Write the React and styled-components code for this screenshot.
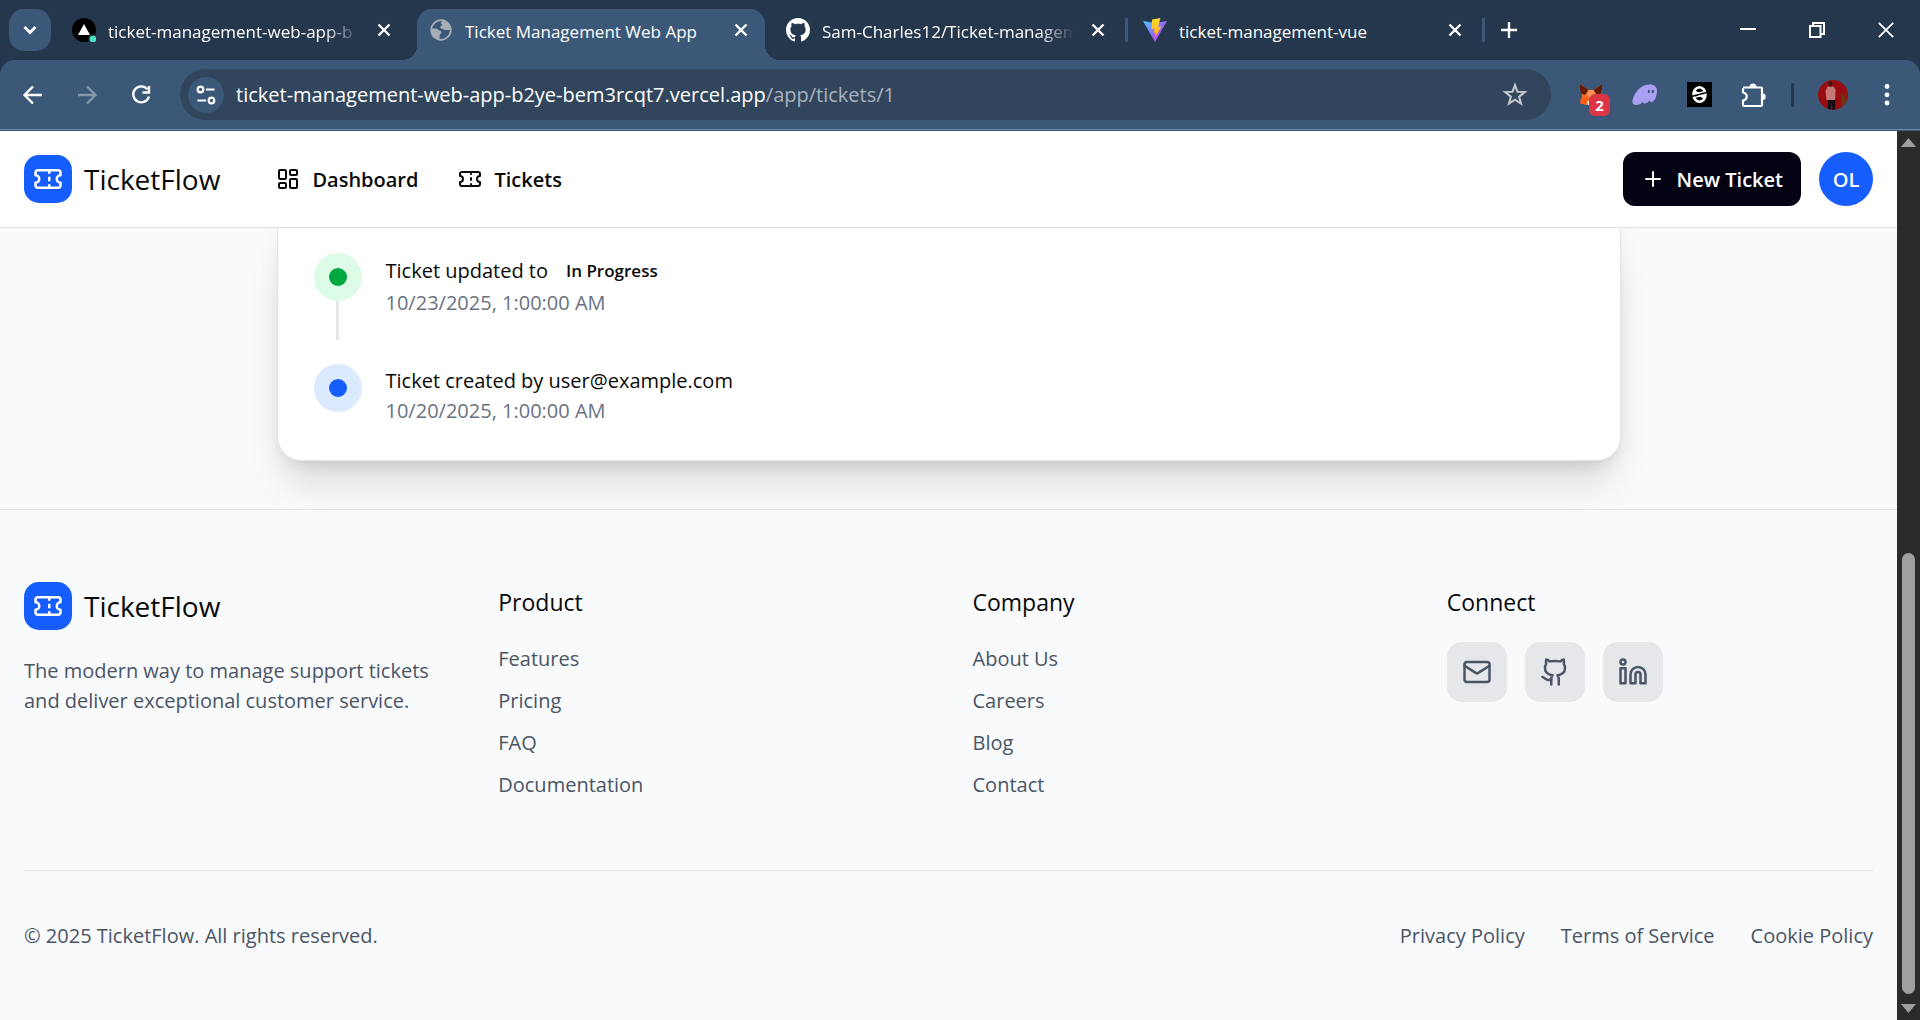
import React from 'react';
import styled, { createGlobalStyle, css } from 'styled-components';
import { LayoutDashboard, Ticket, Plus, Mail, Github, Linkedin } from 'lucide-react';

const color = {
  strip: '#25374d',
  bar: '#3b5879',
  field: '#31455c',
  divider: '#6d8aa6',
  ink: '#0a0a0a',
  body: '#4a5565',
  muted: '#6a7282',
  line: '#e2e3e6',
  page: '#f9fafc',
  brand: '#155dfc',
  night: '#030213',
};

const GlobalStyle = createGlobalStyle`
  *, *::before, *::after { box-sizing: border-box; }
  html, body, #root { height: 100%; }
  body {
    margin: 0;
    overflow: hidden;
    font-family: "Open Sans", "Noto Sans", sans-serif;
    font-size: 20px;
    line-height: 30px;
    color: ${color.ink};
    background: ${color.page};
  }
  button, input { font: inherit; color: inherit; }
  button { padding: 0; border: 0; background: none; cursor: pointer; }
  a { color: inherit; text-decoration: none; }
  h2, p, ul, ol { margin: 0; padding: 0; font-weight: 400; list-style: none; }
  svg { display: block; flex: none; }
`;

/* ---------- browser frame ---------- */

const Window = styled.div`
  display: flex;
  flex-direction: column;
  height: 100%;
`;

const TabStrip = styled.div`
  display: flex;
  align-items: center;
  height: 60px;
  flex: none;
  background: ${color.strip};
  color: #fff;
`;

const TabSearch = styled.button`
  display: grid;
  place-items: center;
  width: 42px;
  height: 42px;
  margin: 0 9px;
  border-radius: 15px;
  background: ${color.bar};
`;

const Tabs = styled.div`
  display: flex;
  align-self: stretch;
  align-items: flex-end;
`;

const TabGap = styled.span`
  width: 9px;
  height: 51px;
  display: grid;
  justify-items: center;
  padding-top: 9px;
  &::before {
    content: '';
    width: 3px;
    height: 24px;
    border-radius: 1px;
    background: ${(p) => (p.$line ? color.bar : 'transparent')};
  }
`;

const Tab = styled.div`
  position: relative;
  display: flex;
  align-items: center;
  gap: 12px;
  width: 348px;
  height: 51px;
  padding: 0 12px 9px;
  border-radius: 15px 15px 0 0;
  ${(p) =>
    p.$active &&
    css`
      background: ${color.bar};
      &::before,
      &::after {
        content: '';
        position: absolute;
        bottom: 0;
        width: 15px;
        height: 15px;
      }
      &::before {
        right: 100%;
        background: radial-gradient(circle at 0 0, transparent 15px, ${color.bar} 15px);
      }
      &::after {
        left: 100%;
        background: radial-gradient(circle at 100% 0, transparent 15px, ${color.bar} 15px);
      }
    `}
`;

const TabTitle = styled.span`
  flex: 1;
  min-width: 0;
  padding-top: 3px;
  overflow: hidden;
  white-space: nowrap;
  font-size: 17px;
  line-height: 24px;
  ${(p) => p.$fade && css`
    mask-image: linear-gradient(to right, #000 calc(100% - 36px), transparent);
  `}
`;

const IconButton = styled.button`
  display: grid;
  place-items: center;
  width: ${(p) => p.$w || 24}px;
  height: ${(p) => p.$h || 24}px;
  color: ${(p) => p.$tone || '#fff'};
`;

const NewTab = styled(IconButton)`
  margin: 0 0 0 9px;
`;

const WindowControls = styled.div`
  display: flex;
  margin-left: auto;
`;

const ToolbarBack = styled.div`
  flex: none;
  background: ${color.strip};
`;

const Toolbar = styled.div`
  display: flex;
  align-items: center;
  height: 69px;
  padding: 0 6px;
  border-radius: 15px 15px 0 0;
  background: ${color.bar};
  color: #fff;
`;

const ToolbarEdge = styled.div`
  height: 2px;
  background: ${color.bar};
  border-top: 1px solid ${color.divider};
`;

const Omnibox = styled.form`
  display: flex;
  align-items: center;
  flex: 1;
  height: 51px;
  margin: 0 13px 0 12px;
  padding: 0 18px 0 8px;
  border-radius: 26px;
  background: ${color.field};
`;

const SiteInfo = styled.button`
  display: grid;
  place-items: center;
  width: 36px;
  height: 36px;
  border-radius: 50%;
  background: ${color.bar};
  color: #fff;
`;

const Address = styled.div`
  flex: 1;
  margin-left: 12px;
  white-space: nowrap;
  color: #a7b2bf;
  outline: none;
  b { font-weight: 400; color: #fff; }
`;

const Extension = styled(IconButton)`
  position: relative;
  width: 54px;
  height: 36px;
`;

const Badge = styled.span`
  position: absolute;
  top: 17px;
  left: 25px;
  width: 21px;
  height: 22px;
  border-radius: 6px;
  background: #dc3545;
  color: #fff;
  font-size: 15px;
  font-weight: 700;
  line-height: 22px;
  text-align: center;
`;

const BarDivider = styled.span`
  width: 3px;
  height: 24px;
  margin: 0 12px 0 11px;
  border-radius: 1px;
  background: ${color.strip};
`;

/* ---------- page ---------- */

const Viewport = styled.div`
  display: flex;
  flex: 1;
  min-height: 0;
`;

const Page = styled.div`
  display: flex;
  flex-direction: column;
  flex: 1;
  min-width: 0;
  overflow: hidden;
`;

const SiteHeader = styled.header`
  position: relative;
  z-index: 1;
  display: flex;
  align-items: center;
  flex: none;
  padding: 21px 24px;
  background: #fff;
  border-bottom: 1px solid ${color.line};
`;

const Brand = styled.a`
  display: flex;
  align-items: center;
  gap: 12px;
  font-size: 28px;
  line-height: 42px;
`;

const BrandMark = styled.span`
  display: grid;
  place-items: center;
  width: 48px;
  height: 48px;
  border-radius: 15px;
  background: ${color.brand};
  color: #fff;
`;

const Nav = styled.nav`
  display: flex;
  gap: 40px;
  margin-left: 56px;
`;

const NavLink = styled.a`
  display: flex;
  align-items: center;
  gap: 12px;
  font-weight: 600;
`;

const Label = styled.span`
  padding-top: 2px;
`;

const Actions = styled.div`
  display: flex;
  gap: 18px;
  margin-left: auto;
`;

const NewTicket = styled.button`
  display: flex;
  align-items: center;
  gap: 12px;
  height: 54px;
  padding: 0 18px;
  border-radius: 12px;
  background: ${color.night};
  color: #fff;
  font-weight: 600;
`;

const Avatar = styled.button`
  width: 54px;
  height: 54px;
  padding-top: 2px;
  border-radius: 50%;
  background: ${color.brand};
  color: #fff;
  font-weight: 600;
`;

const Main = styled.main`
  flex: none;
  width: 100%;
  max-width: 1344px;
  margin: 0 auto;
  padding-bottom: 48px;
`;

const Card = styled.section`
  padding: 25px 36px 34px;
  background: #fff;
  border: 1px solid ${color.line};
  border-top: 0;
  border-radius: 0 0 24px 24px;
  box-shadow: 0 30px 38px -8px rgba(0, 0, 0, 0.12), 0 10px 16px -8px rgba(0, 0, 0, 0.1), 0 0 24px rgba(0, 0, 0, 0.04);
`;

const Event = styled.li`
  display: flex;
  gap: 24px;
  & + & { margin-top: 24px; }
`;

const Rail = styled.div`
  display: flex;
  flex-direction: column;
  align-items: center;
`;

const tones = {
  green: ['#dcfce7', '#00a63e'],
  blue: ['#dbeafe', '#155dfc'],
};

const Marker = styled.span`
  display: grid;
  place-items: center;
  width: 48px;
  height: 48px;
  border-radius: 50%;
  background: ${(p) => tones[p.$tone][0]};
  &::before {
    content: '';
    width: 18px;
    height: 18px;
    border-radius: 50%;
    background: ${(p) => tones[p.$tone][1]};
  }
`;

const Stem = styled.span`
  flex: 1;
  width: 3px;
  background: #e5e7eb;
`;

const EventText = styled.div`
  padding: ${(p) => (p.$last ? '2px 0 0' : '0 0 22px')};
`;

const EventTitle = styled.p`
  display: flex;
  align-items: center;
  gap: 18px;
  min-height: ${(p) => (p.$tall ? 35 : 30)}px;
`;

const Status = styled.span`
  font-size: 17px;
  font-weight: 600;
`;

const Stamp = styled.time`
  display: block;
  color: ${color.muted};
`;

const Footer = styled.footer`
  flex: 1 0 auto;
  padding: 72px 24px;
  border-top: 1px solid ${color.line};
  background: ${color.page};
  color: ${color.body};
`;

const Columns = styled.div`
  display: grid;
  grid-template-columns: repeat(4, 1fr);
  gap: 48px;
  padding-bottom: 70px;
`;

const FooterBrand = styled.div`
  ${Brand} { color: ${color.ink}; }
  p { margin-top: 26px; }
`;

const ColumnTitle = styled.h2`
  padding-top: 2px;
  margin-bottom: 22px;
  font-size: 23px;
  line-height: 36px;
  color: ${color.ink};
`;

const LinkList = styled.ul`
  display: grid;
  gap: 12px;
  padding-top: 2px;
`;

const Socials = styled.div`
  display: flex;
  gap: 18px;
`;

const Social = styled.a`
  display: grid;
  place-items: center;
  width: 60px;
  height: 60px;
  border-radius: 15px;
  background: #e5e7eb;
`;

const Legal = styled.div`
  display: flex;
  justify-content: space-between;
  padding-top: 50px;
  border-top: 1px solid ${color.line};
`;

const LegalLinks = styled.nav`
  display: flex;
  gap: 36px;
`;

/* ---------- scroll bar ---------- */

const ScrollTrack = styled.div`
  display: flex;
  flex-direction: column;
  align-items: center;
  flex: none;
  width: 23px;
  padding: 7px 0;
  background: #2b2b2b;
`;

const ScrollRun = styled.div`
  display: flex;
  flex-direction: column;
  justify-content: flex-end;
  flex: 1;
  width: 13px;
  padding: 10px 0;
`;

const ScrollThumb = styled.div`
  height: calc(53% - 3px);
  border-radius: 7px;
  background: #9f9f9f;
`;

/* ---------- drawings ---------- */

const Stroke = ({ size, box = 24, w = 2, cap = 'butt', children }) => (
  <svg width={size} height={size} viewBox={`0 0 ${box} ${box}`} fill="none" stroke="currentColor" strokeWidth={w} strokeLinecap={cap} aria-hidden="true">
    {children}
  </svg>
);

const CloseX = () => <Stroke size={16} box={16} w={2.4}><path d="M2.5 2.5l11 11M13.5 2.5l-11 11" /></Stroke>;
const Chevron = () => <Stroke size={18} box={18} w={2.8}><path d="M3.5 6l5.5 5.5L14.5 6" /></Stroke>;
const PlusGlyph = () => <Stroke size={18} box={18} w={2.4}><path d="M9 1v16M1 9h16" /></Stroke>;
const BackArrow = () => <Stroke size={24} w={2.4}><path d="M21 12H5M12 3.5L3.500 12l8.500 8.500" /></Stroke>;
const ForwardArrow = () => <Stroke size={24} w={2.4}><path d="M3 12h16M12 3.500l8.500 8.500-8.500 8.500" /></Stroke>;
const Reload = () => (
  <Stroke size={24} w={2.4}>
    <path d="M18.500 6.300A8 8 0 1 0 20 13.500" />
    <path d="M20 3v6.500h-6.500" />
  </Stroke>
);
const Tune = () => (
  <Stroke size={24} w={2.2}>
    <circle cx="6.5" cy="6.5" r="2.8" />
    <path d="M12 6.5h8.5M3.5 17.5H12" />
    <circle cx="17.5" cy="17.5" r="2.8" />
  </Stroke>
);
const Star = () => (
  <Stroke size={26} w={1.9}>
    <path d="M12 2.800l2.300 6.200 6.700.3-5.200 4.200 1.800 6.500L12 16.300 6.400 20l1.800-6.500L3 9.300l6.700-.3z" />
  </Stroke>
);
const Minimize = () => <Stroke size={16} box={16} w={2}><path d="M0 7h16" /></Stroke>;
const Restore = () => <Stroke size={16} box={16} w={2}><path d="M1 4h10.500v11H1zM4 4V1h11v11h-3.500" /></Stroke>;
const CloseWindow = () => <Stroke size={16} box={16} w={1.8}><path d="M.8.8l14.400 14.400M15.200.8L.8 15.200" /></Stroke>;

const VercelIcon = () => (
  <svg width="24" height="24" viewBox="0 0 24 24" aria-hidden="true">
    <circle cx="12" cy="12" r="12" fill="#000" />
    <path d="M12 6l6 11H6z" fill="#fff" />
    <circle cx="21" cy="21" r="4.600" fill="#25374d" />
    <circle cx="21" cy="21" r="3.300" fill="#4be3c2" />
  </svg>
);
const GlobeIcon = () => (
  <svg width="24" height="24" viewBox="0 0 24 24" aria-hidden="true">
    <circle cx="12" cy="12" r="9.800" fill="none" stroke="#a7adb4" strokeWidth="1.800" />
    <path fill="#a7adb4" d="M14.500 2.500c-1 .6-2.600 1.300-2.600 2.500 0 1 1.200.9 1.200 1.900s-1.900 1.100-1.900 2.300c0 1 .7 1.200 1.600 1.200 1.300 0 1.500 1.500 2.900 1.500h5.800C22 7.500 19 3.500 14.500 2.500zM2.300 10.500h4.400c2 0 2.200 1.700 3.600 1.900 1.500.2 2.200.8 2.200 2 0 1.600-1.900 1.400-1.900 3v4C5.500 21.600 1.700 17 2.300 10.500z" />
  </svg>
);
const OctocatIcon = () => (
  <svg width="24" height="24" viewBox="0 0 16 16" aria-hidden="true">
    <path fill="#fff" d="M8 0C3.580 0 0 3.580 0 8c0 3.540 2.290 6.530 5.470 7.590.4.070.55-.17.55-.38 0-.19-.01-.82-.01-1.490-2.010.37-2.530-.49-2.690-.94-.09-.23-.48-.94-.82-1.130-.28-.15-.68-.52-.01-.53.63-.01 1.080.58 1.230.82.72 1.210 1.870.87 2.330.66.07-.52.28-.87.51-1.070-1.780-.2-3.640-.89-3.640-3.950 0-.87.31-1.590.82-2.150-.08-.2-.36-1.020.08-2.120 0 0 .67-.21 2.200.82.64-.18 1.320-.27 2-.27s1.360.09 2 .27c1.530-1.040 2.200-.82 2.200-.82.44 1.100.16 1.920.08 2.120.51.56.82 1.270.82 2.150 0 3.070-1.870 3.750-3.650 3.950.29.25.54.73.54 1.480 0 1.070-.01 1.930-.01 2.200 0 .21.15.46.55.38A8.010 8.010 0 0 0 16 8c0-4.420-3.580-8-8-8z" />
  </svg>
);
const ViteIcon = () => (
  <svg width="24" height="24" viewBox="0 0 24 24" aria-hidden="true">
    <defs>
      <linearGradient id="viteBody" x1="0" y1="0" x2="1" y2="1">
        <stop offset="0" stopColor="#41d1ff" />
        <stop offset="0.600" stopColor="#a259ff" />
        <stop offset="1" stopColor="#bd34fe" />
      </linearGradient>
      <linearGradient id="viteBolt" x1="0" y1="0" x2="0" y2="1">
        <stop offset="0" stopColor="#ffdd35" />
        <stop offset="1" stopColor="#ffa800" />
      </linearGradient>
    </defs>
    <path d="M0 3l12 2 12-2-12 21z" fill="url(#viteBody)" />
    <path d="M17.500 0L9 1.600l-.6 9.600 3.200-.7-1 4.500 2.300-.7-1.500 6.700L18.500 8.300l-3.500.7z" fill="url(#viteBolt)" />
  </svg>
);
const FoxIcon = () => (
  <svg width="24" height="24" viewBox="0 0 24 24" aria-hidden="true">
    <path d="M1 1l8.500 6h5L23 1l-1 12 1 6-6 3H7l-5.500-2L3 13z" fill="#f4702b" />
    <path d="M1 1l8.500 6L6 12 2 10.500 1 6zM23 1l-8.500 6L18 12l4-1.500L23 6z" fill="#661b06" />
    <path d="M9.500 7h5l1.500 7h-8z" fill="#ff9456" />
    <path d="M1.500 16l7-3 1 7-8 1z" fill="#ff5c16" />
    <path d="M8 18h8l-1 4H9z" fill="#e7e3e0" />
  </svg>
);
const GhostIcon = () => (
  <svg width="26" height="22" viewBox="0 0 26 22" aria-hidden="true">
    <path d="M.5 18C.5 12 7 .5 17.500.5 22.500.5 25 3 25 7c0 5-2.500 11-5.500 11-1.500 0-1.700-1-2-2-1 2-3 3.500-5 3.500-1.300 0-1.800-.8-1.500-2-1.500 2-4 3.500-6.500 3.500C1.500 21 .5 20 .5 18z" fill="#ab9ff2" />
    <ellipse cx="16.800" cy="7.500" rx="1.100" ry="1.800" fill="#3b5879" />
    <ellipse cx="20.900" cy="7.500" rx="1.100" ry="1.800" fill="#3b5879" />
  </svg>
);
const SlashIcon = () => (
  <svg width="25" height="25" viewBox="0 0 25 25" aria-hidden="true">
    <rect width="25" height="25" fill="#000" />
    <ellipse cx="12.500" cy="12.500" rx="6" ry="7.300" fill="none" stroke="#fff" strokeWidth="2.600" />
    <path d="M6 9.500L18.500 15.500" stroke="#fff" strokeWidth="3.600" />
    <path d="M4.500 14.500L20.500 10.300" stroke="#000" strokeWidth="1.700" />
    <path d="M7 12.200L18 9.300M7 15.600L18 12.700" stroke="#fff" strokeWidth="1.300" />
  </svg>
);
const PuzzleIcon = () => (
  <svg width="27" height="27" viewBox="0 0 27 27" aria-hidden="true">
    <path d="M3 6.500h18a1 1 0 0 1 1 1V24a1 1 0 0 1-1 1H4a1 1 0 0 1-1-1v-4.500c5-1 5-7 0-8V7.500" fill="none" stroke="#fff" strokeWidth="2.200" strokeLinejoin="round" />
    <path d="M9.500 6a3.500 3.500 0 0 1 7 0zM22.500 12.500a3.200 3.200 0 0 1 0 6.400z" fill="#fff" />
  </svg>
);
const ProfileIcon = () => (
  <svg width="30" height="30" viewBox="0 0 30 30" aria-hidden="true">
    <defs>
      <clipPath id="profileClip"><circle cx="15" cy="15" r="15" /></clipPath>
    </defs>
    <g clipPath="url(#profileClip)">
      <rect width="30" height="30" fill="#990d12" />
      <path d="M24 30c-1-7-1-12 0-19l2 6 3-5-2 8 3-2v12z" fill="#6d3515" />
      <path d="M10 19h7.500l-.6 11h-2.500l-.6-8-.8 8H9.500z" fill="#15100f" />
      <path d="M9.500 6.500h6l2 3-.3 10.500H8.500L7.500 11z" fill="#c77879" />
      <ellipse cx="12.500" cy="4" rx="2" ry="2.800" fill="#3b1a14" />
    </g>
  </svg>
);
const DotsIcon = () => (
  <svg width="6" height="24" viewBox="0 0 6 24" fill="#fff" aria-hidden="true">
    <circle cx="3" cy="3.5" r="2.4" />
    <circle cx="3" cy="11.8" r="2.4" />
    <circle cx="3" cy="20" r="2.4" />
  </svg>
);
const ScrollArrow = ({ up }) => (
  <svg width="15" height="9" viewBox="0 0 15 9" aria-hidden="true">
    <path d={up ? 'M7.5 0L15 9H0z' : 'M7.5 9L0 0h15z'} fill="#9f9f9f" />
  </svg>
);

/* ---------- content ---------- */

const browserTabs = [
  { title: 'ticket-management-web-app-b', Icon: VercelIcon, fade: true },
  { title: 'Ticket Management Web App', Icon: GlobeIcon, active: true },
  { title: 'Sam-Charles12/Ticket-managem', Icon: OctocatIcon, fade: true, line: true },
  { title: 'ticket-management-vue', Icon: ViteIcon, line: true },
];

const footerColumns = [
  { title: 'Product', links: ['Features', 'Pricing', 'FAQ', 'Documentation'] },
  { title: 'Company', links: ['About Us', 'Careers', 'Blog', 'Contact'] },
];

const socials = [
  { name: 'Email', Icon: Mail },
  { name: 'GitHub', Icon: Github },
  { name: 'LinkedIn', Icon: Linkedin },
];

const Logo = () => (
  <Brand href="#">
    <BrandMark><Ticket size={30} /></BrandMark>
    TicketFlow
  </Brand>
);

function BrowserFrame() {
  return (
    <>
      <TabStrip>
        <TabSearch aria-label="Search tabs"><Chevron /></TabSearch>
        <Tabs>
          {browserTabs.map(({ title, Icon, active, fade, line }) => (
            <React.Fragment key={title}>
              <Tab $active={active}>
                <Icon />
                <TabTitle $fade={fade}>{title}</TabTitle>
                <IconButton aria-label="Close tab"><CloseX /></IconButton>
              </Tab>
              <TabGap $line={line} />
            </React.Fragment>
          ))}
        </Tabs>
        <NewTab aria-label="New tab"><PlusGlyph /></NewTab>
        <WindowControls>
          <IconButton $w={69} $h={60} aria-label="Minimize"><Minimize /></IconButton>
          <IconButton $w={69} $h={60} aria-label="Restore"><Restore /></IconButton>
          <IconButton $w={69} $h={60} aria-label="Close"><CloseWindow /></IconButton>
        </WindowControls>
      </TabStrip>
      <ToolbarBack>
        <Toolbar>
          <IconButton $w={54} $h={48} aria-label="Back"><BackArrow /></IconButton>
          <IconButton $w={54} $h={48} $tone="#8497ab" aria-label="Forward"><ForwardArrow /></IconButton>
          <IconButton $w={54} $h={48} aria-label="Reload"><Reload /></IconButton>
          <Omnibox onSubmit={(e) => e.preventDefault()}>
            <SiteInfo type="button" aria-label="Site information"><Tune /></SiteInfo>
            <Address role="textbox" aria-label="Address" contentEditable suppressContentEditableWarning spellCheck={false}>
              <b>ticket-management-web-app-b2ye-bem3rcqt7.vercel.app</b>/app/tickets/1
            </Address>
            <IconButton type="button" $w={36} $h={36} $tone="#c3c6ca" aria-label="Bookmark"><Star /></IconButton>
          </Omnibox>
          <Extension aria-label="Wallet"><FoxIcon /><Badge>2</Badge></Extension>
          <Extension aria-label="Ghost wallet"><GhostIcon /></Extension>
          <Extension aria-label="Shortcuts"><SlashIcon /></Extension>
          <Extension aria-label="Extensions"><PuzzleIcon /></Extension>
          <BarDivider />
          <Extension aria-label="Profile"><ProfileIcon /></Extension>
          <Extension aria-label="Menu"><DotsIcon /></Extension>
        </Toolbar>
        <ToolbarEdge />
      </ToolbarBack>
    </>
  );
}

export default function App() {
  return (
    <Window>
      <GlobalStyle />
      <BrowserFrame />
      <Viewport>
        <Page>
          <SiteHeader>
            <Logo />
            <Nav>
              <NavLink href="#"><LayoutDashboard size={24} /><Label>Dashboard</Label></NavLink>
              <NavLink href="#"><Ticket size={24} /><Label>Tickets</Label></NavLink>
            </Nav>
            <Actions>
              <NewTicket><Plus size={24} /><Label>New Ticket</Label></NewTicket>
              <Avatar>OL</Avatar>
            </Actions>
          </SiteHeader>
          <Main>
            <Card>
              <ol>
                <Event>
                  <Rail><Marker $tone="green" /><Stem /></Rail>
                  <EventText>
                    <EventTitle $tall>Ticket updated to <Status>In Progress</Status></EventTitle>
                    <Stamp>10/23/2025, 1:00:00 AM</Stamp>
                  </EventText>
                </Event>
                <Event>
                  <Rail><Marker $tone="blue" /></Rail>
                  <EventText $last>
                    <EventTitle>Ticket created by user@example.com</EventTitle>
                    <Stamp>10/20/2025, 1:00:00 AM</Stamp>
                  </EventText>
                </Event>
              </ol>
            </Card>
          </Main>
          <Footer>
            <Columns>
              <FooterBrand>
                <Logo />
                <p>The modern way to manage support tickets and deliver exceptional customer service.</p>
              </FooterBrand>
              {footerColumns.map(({ title, links }) => (
                <div key={title}>
                  <ColumnTitle>{title}</ColumnTitle>
                  <LinkList>
                    {links.map((label) => <li key={label}><a href="#">{label}</a></li>)}
                  </LinkList>
                </div>
              ))}
              <div>
                <ColumnTitle>Connect</ColumnTitle>
                <Socials>
                  {socials.map(({ name, Icon }) => (
                    <Social key={name} href="#" aria-label={name}><Icon size={30} /></Social>
                  ))}
                </Socials>
              </div>
            </Columns>
            <Legal>
              <p>© 2025 TicketFlow. All rights reserved.</p>
              <LegalLinks>
                <a href="#">Privacy Policy</a>
                <a href="#">Terms of Service</a>
                <a href="#">Cookie Policy</a>
              </LegalLinks>
            </Legal>
          </Footer>
        </Page>
        <ScrollTrack>
          <ScrollArrow up />
          <ScrollRun><ScrollThumb /></ScrollRun>
          <ScrollArrow />
        </ScrollTrack>
      </Viewport>
    </Window>
  );
}
